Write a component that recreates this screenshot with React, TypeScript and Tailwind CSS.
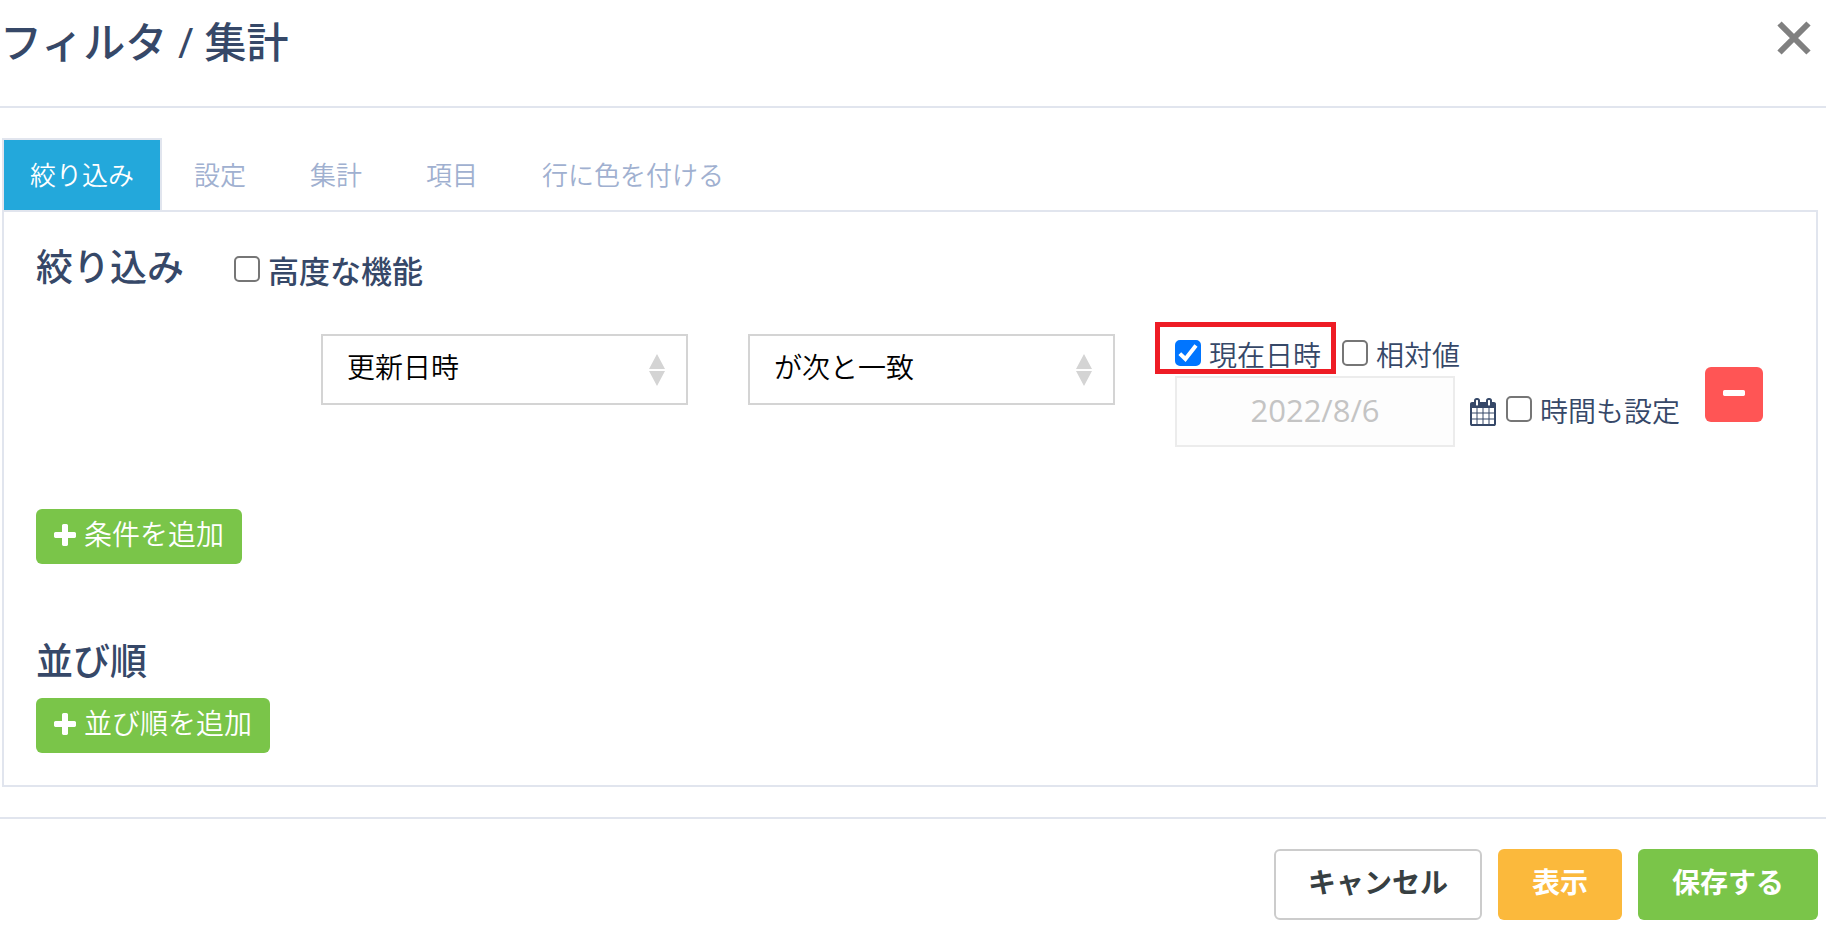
import { useState } from "react";
import type { ReactNode } from "react";

const TABS = ["絞り込み", "設定", "集計", "項目", "行に色を付ける"];

function PlusIcon() {
  return (
    <svg viewBox="192 128 1408 1408" className="h-[22px] w-[22px] fill-current" aria-hidden="true">
      <path d="M1600 736v192q0 40-28 68t-68 28h-416v416q0 40-28 68t-68 28h-192q-40 0-68-28t-28-68v-416h-416q-40 0-68-28t-28-68v-192q0-40 28-68t68-28h416v-416q0-40 28-68t68-28h192q40 0 68 28t28 68v416h416q40 0 68 28t28 68z" />
    </svg>
  );
}

function MinusIcon() {
  return (
    <svg viewBox="0 0 1408 384" className="h-[6px] w-[22px] fill-current" aria-hidden="true">
      <path d="M1408 96v192q0 40-28 68t-68 28h-1216q-40 0-68-28t-28-68v-192q0-40 28-68t68-28h1216q40 0 68 28t28 68z" />
    </svg>
  );
}

function CalendarIcon() {
  return (
    <svg viewBox="64 0 1664 1792" className="h-7 w-[26px] shrink-0 fill-current" aria-hidden="true">
      <path d="M192 1664h288v-288h-288v288zm352 0h320v-288h-320v288zm-352-352h288v-320h-288v320zm352 0h320v-320h-320v320zm-352-384h288v-288h-288v288zm736 736h320v-288h-320v288zm-384-736h320v-288h-320v288zm768 736h288v-288h-288v288zm-384-352h320v-320h-320v320zm-352-864v-288q0-13-9.5-22.5t-22.5-9.5h-64q-13 0-22.5 9.5t-9.5 22.5v288q0 13 9.5 22.5t22.5 9.5h64q13 0 22.5-9.5t9.5-22.5zm736 864h288v-320h-288v320zm-384-384h320v-288h-320v288zm384 0h288v-288h-288v288zm32-480v-288q0-13-9.5-22.5t-22.5-9.5h-64q-13 0-22.5 9.5t-9.5 22.5v288q0 13 9.5 22.5t22.5 9.5h64q13 0 22.5-9.5t9.5-22.5zm384-64v1280q0 52-38 90t-90 38h-1408q-52 0-90-38t-38-90v-1280q0-52 38-90t90-38h128v-96q0-66 47-113t113-47h64q66 0 113 47t47 113v96h384v-96q0-66 47-113t113-47h64q66 0 113 47t47 113v96h128q52 0 90 38t38 90z" />
    </svg>
  );
}

function Check({ id, children, defaultChecked }: { id: string; children: ReactNode; defaultChecked?: boolean }) {
  return (
    <div className="flex shrink-0 items-center gap-2 whitespace-nowrap">
      <span className="relative flex h-[26px] w-[26px] shrink-0">
        <input
          id={id}
          type="checkbox"
          defaultChecked={defaultChecked}
          className="peer h-[26px] w-[26px] appearance-none rounded-[5px] border-2 border-[#767676] bg-white checked:border-[#0075ff] checked:bg-[#0075ff]"
        />
        <svg
          viewBox="0 0 26 26"
          className="pointer-events-none absolute inset-0 hidden fill-none stroke-white peer-checked:block"
          strokeWidth="4"
          aria-hidden="true"
        >
          <path d="M4.8 13.6L10.4 19L21 5.4" />
        </svg>
      </span>
      <label htmlFor={id} className="pt-1">
        {children}
      </label>
    </div>
  );
}

function Select({ label, options }: { label: string; options: string[] }) {
  return (
    <div className="relative w-[367px] shrink">
      <select
        aria-label={label}
        className="h-[71px] w-full appearance-none border-2 border-[#d4d4d4] bg-white pr-12 pb-1 pl-6 text-[28px] text-black"
      >
        {options.map((o) => (
          <option key={o}>{o}</option>
        ))}
      </select>
      <svg
        viewBox="0 0 16 32"
        className="pointer-events-none absolute top-5 right-[23px] h-8 w-4 fill-[#d4d4d4]"
        aria-hidden="true"
      >
        <path d="M8 0L16 15H0zM0 17H16L8 32z" />
      </svg>
    </div>
  );
}

function AddButton({ children }: { children: ReactNode }) {
  return (
    <button
      type="button"
      className="flex h-[55px] items-center gap-2 rounded-md bg-[#7ac549] px-[18px] pb-1 text-[28px] text-white"
    >
      <PlusIcon />
      {children}
    </button>
  );
}

export default function App() {
  const [active, setActive] = useState(0);
  return (
    <div className="bg-white font-['Open_Sans','Noto_Sans_CJK_JP',sans-serif] leading-tight font-[350] text-[#364868]">
      <header className="flex h-[108px] items-start justify-between border-b-2 border-[#e1e5ee] pr-[15px]">
        <h1 className="pt-4 text-[42px] font-medium">フィルタ / 集計</h1>
        <button type="button" aria-label="閉じる" className="mt-[21px] text-[#808080]">
          <svg viewBox="0 0 34 34" className="h-[34px] w-[34px] stroke-current" strokeWidth="6" aria-hidden="true">
            <path d="M2.5 2.5L31.5 31.5M31.5 2.5L2.5 31.5" />
          </svg>
        </button>
      </header>

      <main className="pt-[30px] pr-2 pb-[30px] pl-[2px]">
        <div role="tablist" className="flex text-[26px]">
          {TABS.map((t, i) => (
            <button
              key={t}
              type="button"
              role="tab"
              aria-selected={i === active}
              onClick={() => setActive(i)}
              className={
                i === active
                  ? "h-[72px] border-2 border-b-0 border-[#e1e5ee] bg-[#23a8db] px-[26px] text-white"
                  : "h-[72px] px-8 pt-[2px] text-[#a0b0d0]"
              }
            >
              {t}
            </button>
          ))}
        </div>

        <section className="h-[577px] border-2 border-[#e1e5ee] pl-8">
          <div className="flex h-[122px] items-start pt-[30px]">
            <h2 className="w-[198px] pt-[2px] text-[37px] font-medium">絞り込み</h2>
            <div className="pt-[5px] text-[31px] leading-10 font-medium">
              <Check id="advanced">高度な機能</Check>
            </div>
          </div>

          <div className="flex h-[175px] items-start pr-[53px] pl-[285px]">
            <Select label="項目" options={["更新日時", "作成日時"]} />
            <div className="w-[60px] shrink" />
            <Select label="条件" options={["が次と一致", "が次と一致しない"]} />

            <div className="-mt-3 ml-10 flex flex-col text-[28px] leading-7">
              <div className="flex items-end gap-[6px]">
                <div className="flex h-[52px] items-end border-5 border-[#ee1c25] pr-[10px] pl-[15px]">
                  <Check id="now" defaultChecked>
                    現在日時
                  </Check>
                </div>
                <div className="pb-[5px]">
                  <Check id="relative">相対値</Check>
                </div>
              </div>
              <div className="mt-[2px] flex items-center pl-5">
                <input
                  aria-label="日付"
                  disabled
                  defaultValue="2022/8/6"
                  className="h-[71px] w-[280px] border-2 border-[#ececec] bg-[#fdfdfd] pb-1 text-center text-[31px] font-normal text-[#c4c4c4]"
                />
                <div className="ml-[15px] flex items-center gap-[10px]">
                  <CalendarIcon />
                  <div className="pb-[6px]">
                    <Check id="with-time">時間も設定</Check>
                  </div>
                </div>
              </div>
            </div>

            <button
              type="button"
              aria-label="条件を削除"
              className="mt-[33px] ml-auto flex h-[55px] w-[58px] shrink-0 items-center justify-center rounded-md bg-[#ff5555] pb-1 text-white"
            >
              <MinusIcon />
            </button>
          </div>

          <AddButton>条件を追加</AddButton>
          <h2 className="pt-[74px] pb-[14px] text-[37px] font-medium">並び順</h2>
          <AddButton>並び順を追加</AddButton>
        </section>
      </main>

      <footer className="flex justify-end gap-4 border-t-2 border-[#e1e5ee] pt-[30px] pr-2 pb-2 text-[28px] font-bold">
        <button type="button" className="h-[71px] rounded-md border-2 border-[#cccccc] bg-white px-8 pb-1 text-[#373f42]">
          キャンセル
        </button>
        <button type="button" className="h-[71px] rounded-md bg-[#fbb93c] px-[34px] pb-1 text-white">
          表示
        </button>
        <button type="button" className="h-[71px] rounded-md bg-[#7ac549] px-[34px] pb-1 text-white">
          保存する
        </button>
      </footer>
    </div>
  );
}
